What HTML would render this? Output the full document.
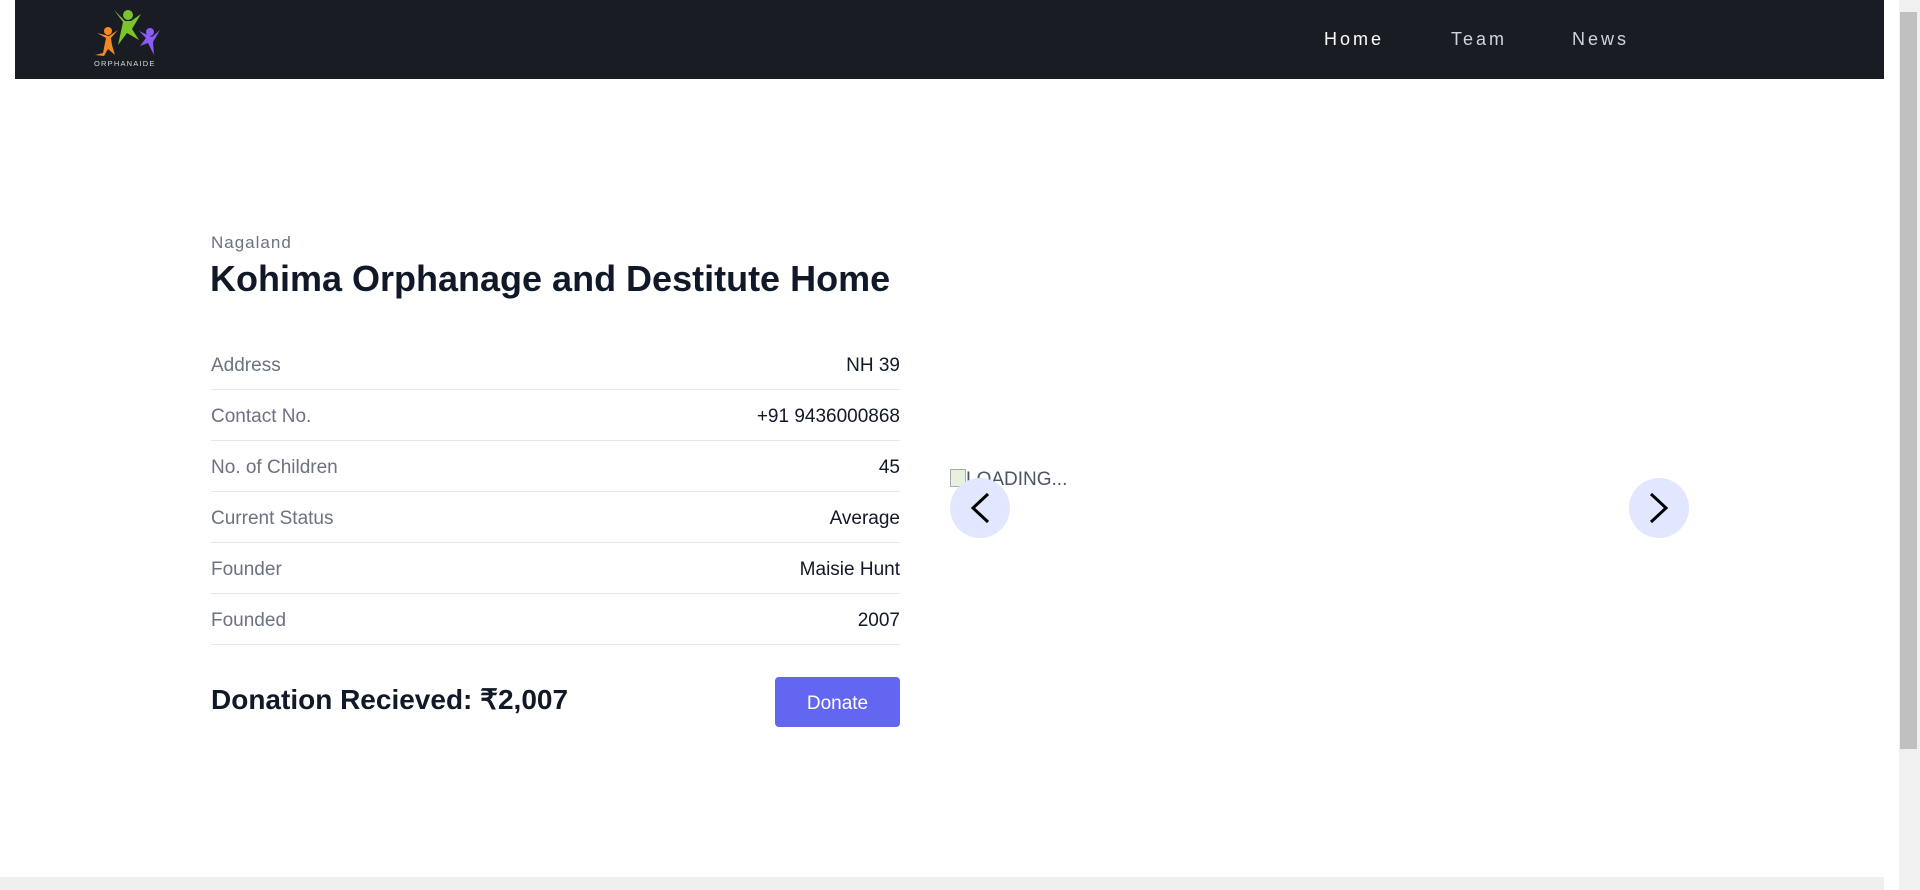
<!DOCTYPE html>
<html><head><meta charset="utf-8"><style>
*{margin:0;padding:0;box-sizing:border-box}
body{width:1920px;height:890px;background:#fff;font-family:"Liberation Sans",sans-serif;position:relative;overflow:hidden}
.nav{position:absolute;left:15px;top:0;width:1869px;height:79px;background:#1a1c24}
.nav a{position:absolute;top:29px;font-size:18px;letter-spacing:3px;color:#d1d5db;text-decoration:none}
.sb{position:absolute;left:1899px;top:0;width:21px;height:890px;background:#f0f0f0}
.thumb{position:absolute;left:1900px;top:12px;width:17px;height:737px;background:#c0c0c0}
.foot{position:absolute;left:0;top:877px;width:1884px;height:13px;background:#efefef}
.t{position:absolute;white-space:nowrap}
.row{position:absolute;left:211px;width:689px;height:51px;border-bottom:1px solid #e5e7eb;font-size:19px}
.row .l{position:absolute;left:0;top:16px;color:#6b7280}
.row .r{position:absolute;right:0;top:16px;color:#111827}
.circ{position:absolute;width:60px;height:60px;border-radius:50%;background:#e0e7ff}
</style></head><body>
<div class="nav">
<svg style="position:absolute;left:79px;top:8px" width="76" height="60" viewBox="0 0 76 60">
<g fill="#f08a24"><circle cx="14" cy="23" r="4"/><path d="M3 25 L12 30 L9 45 L1 47 L10 48 L14 41 L21 47 L18 37 L17 30 L24 22 L15 28 Z"/></g>
<g fill="#7cc42e"><circle cx="34" cy="7" r="5"/><path d="M20 2 L29 14 L24 37 L33 25 L45 32 L38 21 L47 6 L37 13 L31 13 Z"/></g>
<g fill="#8b5cf6"><circle cx="56" cy="24" r="4"/><path d="M45 23 L52 30 L46 38 L54 35 L60 47 L59 34 L66 22 L58 29 Z"/></g>
<text x="0" y="58" font-family="Liberation Sans" font-size="7.5" letter-spacing="1.2" fill="#d9d9d9">ORPHANAIDE</text>
</svg>
<a style="left:1309px;color:#fff">Home</a>
<a style="left:1436px">Team</a>
<a style="left:1557px">News</a>
</div>
<div class="t" style="left:211px;top:233px;font-size:17px;color:#6b7280;letter-spacing:1px">Nagaland</div>
<div class="t" style="left:210px;top:258px;font-size:36px;font-weight:bold;color:#111827">Kohima Orphanage and Destitute Home</div>
<div class="row" style="top:339px"><span class="l">Address</span><span class="r">NH 39</span></div>
<div class="row" style="top:390px"><span class="l">Contact No.</span><span class="r">+91 9436000868</span></div>
<div class="row" style="top:441px"><span class="l">No. of Children</span><span class="r">45</span></div>
<div class="row" style="top:492px"><span class="l">Current Status</span><span class="r">Average</span></div>
<div class="row" style="top:543px"><span class="l">Founder</span><span class="r">Maisie Hunt</span></div>
<div class="row" style="top:594px"><span class="l">Founded</span><span class="r">2007</span></div>
<div class="t" style="left:211px;top:683px;font-size:28px;font-weight:bold;color:#111827">Donation Recieved: ₹2,007</div>
<div style="position:absolute;left:775px;top:677px;width:125px;height:50px;background:#6366f1;border-radius:4px;color:#fff;font-size:19px;text-align:center;line-height:54px">Donate</div>
<div class="t" style="left:950px;top:469px;font-size:19px;color:#4b5563"><span style="display:inline-block;width:16px;height:18px;border:1px solid #aaa;background:#e8f0e0;vertical-align:-2px"></span>LOADING...</div>
<div class="circ" style="left:950px;top:478px"><svg width="60" height="60"><path d="M38 16 L23 30 L38 44" fill="none" stroke="#000" stroke-width="3"/></svg></div>
<div class="circ" style="left:1629px;top:478px"><svg width="60" height="60"><path d="M22 16 L37 30 L22 44" fill="none" stroke="#000" stroke-width="3"/></svg></div>
<div class="foot"></div>
<div class="sb"></div><div class="thumb"></div>
</body></html>
